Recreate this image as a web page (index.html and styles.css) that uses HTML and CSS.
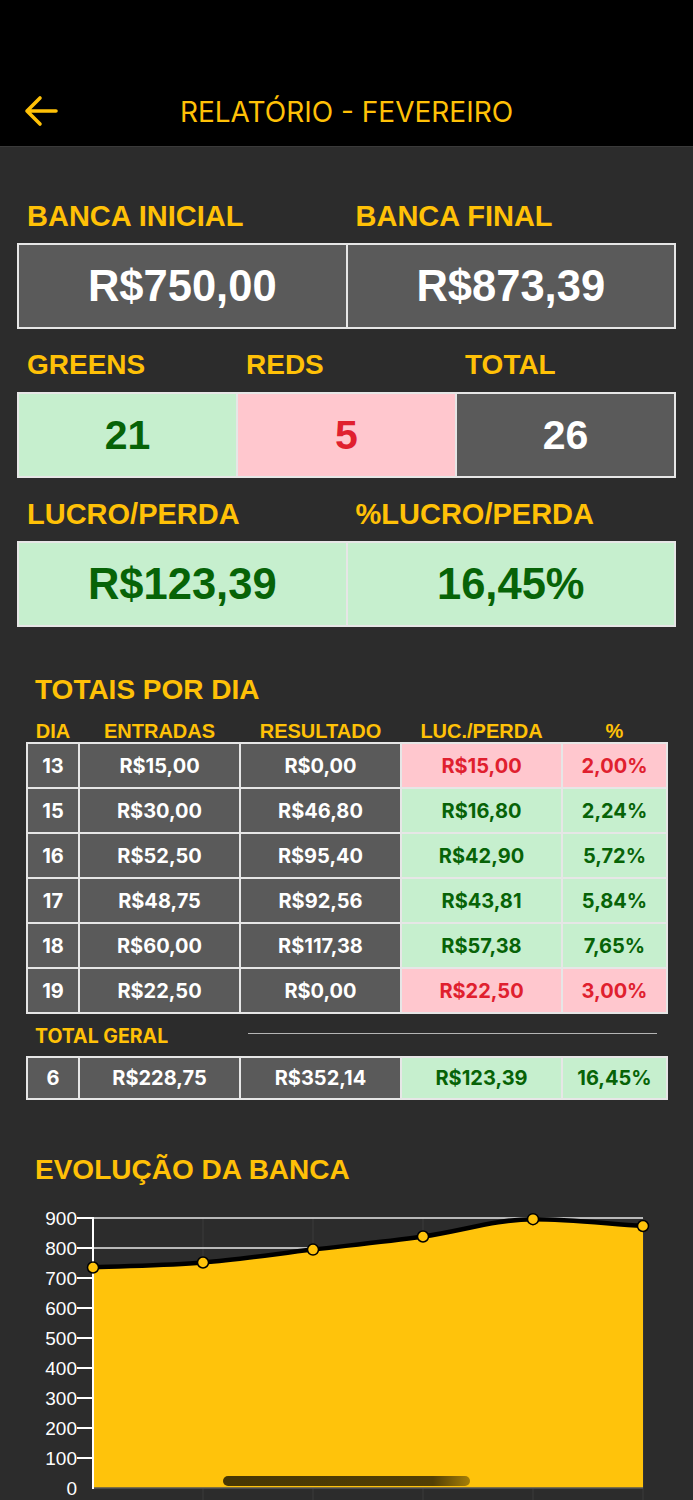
FILE: index.html
```html
<!DOCTYPE html>
<html lang="pt-BR">
<head>
    <meta charset="UTF-8">
    <meta name="viewport" content="width=device-width, initial-scale=1.0">
    <title>Relatório - Fevereiro</title>
    <link rel="stylesheet" href="styles.css">
</head>
<body>
    <header class="topbar">
        <svg class="back" width="36" height="32" viewBox="0 0 36 32" aria-hidden="true">
            <path d="M33 16 H4 M17 3 L4 16 L17 29" fill="none" stroke="#FFC107" stroke-width="3.6" stroke-linecap="round" stroke-linejoin="round"/>
        </svg>
        <h1 class="title">RELATÓRIO - FEVEREIRO</h1>
    </header>

    <main class="report">
        <!-- Resumo do mês -->
        <section class="summary">
            <div class="labels cols-2">
                <span>BANCA INICIAL</span>
                <span>BANCA FINAL</span>
            </div>
            <div class="boxes cols-2">
                <div class="box dark">R$750,00</div>
                <div class="box dark">R$873,39</div>
            </div>

            <div class="labels cols-3 gap-top">
                <span>GREENS</span>
                <span>REDS</span>
                <span>TOTAL</span>
            </div>
            <div class="boxes cols-3 counts">
                <div class="box green">21</div>
                <div class="box red">5</div>
                <div class="box dark">26</div>
            </div>

            <div class="labels cols-2 gap-top">
                <span>LUCRO/PERDA</span>
                <span>%LUCRO/PERDA</span>
            </div>
            <div class="boxes cols-2">
                <div class="box green">R$123,39</div>
                <div class="box green">16,45%</div>
            </div>
        </section>

        <!-- Tabela por dia -->
        <section class="daily">
            <h2 class="section-title">TOTAIS POR DIA</h2>
            <div class="thead">
                <span>DIA</span>
                <span>ENTRADAS</span>
                <span>RESULTADO</span>
                <span>LUC./PERDA</span>
                <span>%</span>
            </div>
            <div class="table">
                <div class="cell">13</div><div class="cell">R$15,00</div><div class="cell">R$0,00</div><div class="cell red">R$15,00</div><div class="cell red">2,00%</div>
                <div class="cell">15</div><div class="cell">R$30,00</div><div class="cell">R$46,80</div><div class="cell green">R$16,80</div><div class="cell green">2,24%</div>
                <div class="cell">16</div><div class="cell">R$52,50</div><div class="cell">R$95,40</div><div class="cell green">R$42,90</div><div class="cell green">5,72%</div>
                <div class="cell">17</div><div class="cell">R$48,75</div><div class="cell">R$92,56</div><div class="cell green">R$43,81</div><div class="cell green">5,84%</div>
                <div class="cell">18</div><div class="cell">R$60,00</div><div class="cell">R$117,38</div><div class="cell green">R$57,38</div><div class="cell green">7,65%</div>
                <div class="cell">19</div><div class="cell">R$22,50</div><div class="cell">R$0,00</div><div class="cell red">R$22,50</div><div class="cell red">3,00%</div>
            </div>

            <div class="total-line">
                <span class="total-label">TOTAL GERAL</span>
                <span class="rule"></span>
            </div>
            <div class="table total">
                <div class="cell">6</div><div class="cell">R$228,75</div><div class="cell">R$352,14</div><div class="cell green">R$123,39</div><div class="cell green">16,45%</div>
            </div>
        </section>

        <!-- Gráfico -->
        <section class="chart">
            <h2 class="section-title">EVOLUÇÃO DA BANCA</h2>
            <svg class="plot" width="693" height="300" viewBox="0 1200 693 300">
                <g stroke="#3a3a3a" stroke-width="1">
                    <line x1="203" y1="1218" x2="203" y2="1500"/>
                    <line x1="313" y1="1218" x2="313" y2="1500"/>
                    <line x1="423" y1="1218" x2="423" y2="1500"/>
                    <line x1="533" y1="1218" x2="533" y2="1500"/>
                    <line x1="643" y1="1218" x2="643" y2="1500"/>
                </g>
                <g stroke="#e8e8e8" stroke-width="1.5">
                    <line x1="93" y1="1218" x2="643" y2="1218"/>
                    <line x1="93" y1="1248" x2="643" y2="1248"/>
                    <line x1="93" y1="1278" x2="643" y2="1278"/>
                </g>
                <path class="area" d="M93 1267.5 C129.7 1265.8 166.3 1265.5 203 1262.5 C239.7 1259.5 276.3 1253.9 313 1249.6 C349.7 1245.3 386.3 1241.6 423 1236.5 C459.7 1231.4 496.3 1219.2 533 1219.2 C569.7 1219.2 606.3 1223.7 643 1226 L643 1488 L93 1488 Z"/>
                <line x1="93" y1="1488" x2="643" y2="1488" stroke="#555" stroke-width="1.5"/>
                <path class="curve" d="M93 1267.5 C129.7 1265.8 166.3 1265.5 203 1262.5 C239.7 1259.5 276.3 1253.9 313 1249.6 C349.7 1245.3 386.3 1241.6 423 1236.5 C459.7 1231.4 496.3 1219.2 533 1219.2 C569.7 1219.2 606.3 1223.7 643 1226"/>
                <g stroke="#fff" stroke-width="2">
                    <line x1="93" y1="1217" x2="93" y2="1489"/>
                    <line x1="77" y1="1218" x2="93" y2="1218"/>
                    <line x1="77" y1="1248" x2="93" y2="1248"/>
                    <line x1="77" y1="1278" x2="93" y2="1278"/>
                    <line x1="77" y1="1308" x2="93" y2="1308"/>
                    <line x1="77" y1="1338" x2="93" y2="1338"/>
                    <line x1="77" y1="1368" x2="93" y2="1368"/>
                    <line x1="77" y1="1398" x2="93" y2="1398"/>
                    <line x1="77" y1="1428" x2="93" y2="1428"/>
                    <line x1="77" y1="1458" x2="93" y2="1458"/>
                </g>
                <g class="axis-labels">
                    <text x="77" y="1225">900</text>
                    <text x="77" y="1255">800</text>
                    <text x="77" y="1285">700</text>
                    <text x="77" y="1315">600</text>
                    <text x="77" y="1345">500</text>
                    <text x="77" y="1375">400</text>
                    <text x="77" y="1405">300</text>
                    <text x="77" y="1435">200</text>
                    <text x="77" y="1465">100</text>
                    <text x="77" y="1495">0</text>
                </g>
                <g class="dots">
                    <circle cx="93" cy="1267.5" r="5.5"/>
                    <circle cx="203" cy="1262.5" r="5.5"/>
                    <circle cx="313" cy="1249.6" r="5.5"/>
                    <circle cx="423" cy="1236.5" r="5.5"/>
                    <circle cx="533" cy="1219.2" r="5.5"/>
                    <circle cx="643" cy="1226" r="5.5"/>
                </g>
            </svg>
        </section>
    </main>

    <div class="home-indicator"></div>
</body>
</html>
```

FILE: styles.css
```css
body {
    margin: 0;
    background-color: #2c2c2c;
    font-family: "Liberation Sans", Arial, sans-serif;
    height: 1500px;
    overflow: hidden;
    position: relative;
}
.topbar {
    height: 147px;
    background-color: #000;
    border-bottom: 1px solid #3a3a3a;
    box-sizing: border-box;
    display: flex;
    align-items: flex-end;
    justify-content: center;
    position: relative;
    padding-bottom: 17px;
}
.back {
    position: absolute;
    left: 23px;
    top: 95px;
}
.title {
    margin: 0;
    color: #FFC107;
    font-family: Inter, "Liberation Sans", sans-serif;
    font-weight: 400;
    font-size: 28px;
    line-height: 34px;
}
.summary {
    padding: 52px 17px 0;
}
.labels {
    display: grid;
    padding: 0 2px;
    column-gap: 2px;
    margin-bottom: 10px;
}
.labels span {
    padding-left: 8px;
    color: #FFC107;
    font-weight: bold;
    font-size: 29px;
    line-height: 34px;
}
.labels.cols-3 span {
    font-size: 28px;
}
.gap-top {
    margin-top: 19px;
}
.cols-2 {
    grid-template-columns: 1fr 1fr;
}
.cols-3 {
    grid-template-columns: 1fr 1fr 1fr;
}
.boxes {
    display: grid;
    gap: 2px;
    padding: 2px;
    background-color: #e6e6e6;
}
.box {
    height: 82px;
    display: flex;
    align-items: center;
    justify-content: center;
    font-weight: bold;
    font-size: 43.5px;
}
.counts .box {
    font-size: 41px;
}
.dark {
    background-color: #5a5a5a;
    color: #fff;
}
.green {
    background-color: #c6efce;
    color: #076307;
}
.red {
    background-color: #ffc7ce;
    color: #e0202e;
}
.daily {
    padding: 46px 25px 0 26px;
}
.section-title {
    margin: 0;
    padding-left: 9px;
    color: #FFC107;
    font-size: 28px;
    line-height: 34px;
    font-weight: bold;
}
.thead, .table, .total-line {
    display: grid;
    grid-template-columns: 50px 159px 159px 159px 103px;
    column-gap: 2px;
    padding: 0 2px;
}
.thead {
    margin-top: 13px;
    margin-bottom: 0;
}
.thead span {
    text-align: center;
    color: #FFC107;
    font-weight: bold;
    font-size: 20px;
    line-height: 22px;
}
.table {
    gap: 2px;
    padding: 2px;
    background-color: #e6e6e6;
    width: max-content;
}
.cell {
    height: 43px;
    display: flex;
    align-items: center;
    justify-content: center;
    background-color: #5a5a5a;
    color: #fff;
    font-family: Inter, "Liberation Sans", sans-serif;
    font-weight: 700;
    font-size: 20px;
}
.cell.green {
    background-color: #c6efce;
    color: #076307;
}
.cell.red {
    background-color: #ffc7ce;
    color: #e0202e;
}
.total-line {
    margin: 11px 0 9px;
    align-items: center;
}
.total-label {
    grid-column: 1 / 3;
    padding-left: 7px;
    color: #FFC107;
    font-family: Inter, "Liberation Sans", sans-serif;
    font-weight: 700;
    font-size: 19.5px;
    line-height: 22px;
}
.rule {
    grid-column: 3 / 6;
    height: 1px;
    margin: 0 9px 5px 7px;
    background-color: #b5b5b5;
}
.table.total .cell {
    height: 40px;
}
.chart {
    padding-top: 53px;
}
.chart .section-title {
    padding-left: 35px;
}
.plot {
    display: block;
    margin-top: 13px;
}
.area {
    fill: #FFC30B;
}
.curve {
    fill: none;
    stroke: #000;
    stroke-width: 4.5;
    stroke-linecap: round;
}
.axis-labels text {
    fill: #fff;
    font-family: "Liberation Sans", Arial, sans-serif;
    font-size: 19px;
    text-anchor: end;
}
.dots circle {
    fill: #FFC30B;
    stroke: #000;
    stroke-width: 1.5;
}
.home-indicator {
    position: absolute;
    left: 223px;
    top: 1476px;
    width: 247px;
    height: 10px;
    border-radius: 5px;
    background: linear-gradient(90deg, rgba(0, 0, 0, 0.72) 0%, rgba(0, 0, 0, 0.68) 85%, rgba(0, 0, 0, 0.35) 100%);
}
```
